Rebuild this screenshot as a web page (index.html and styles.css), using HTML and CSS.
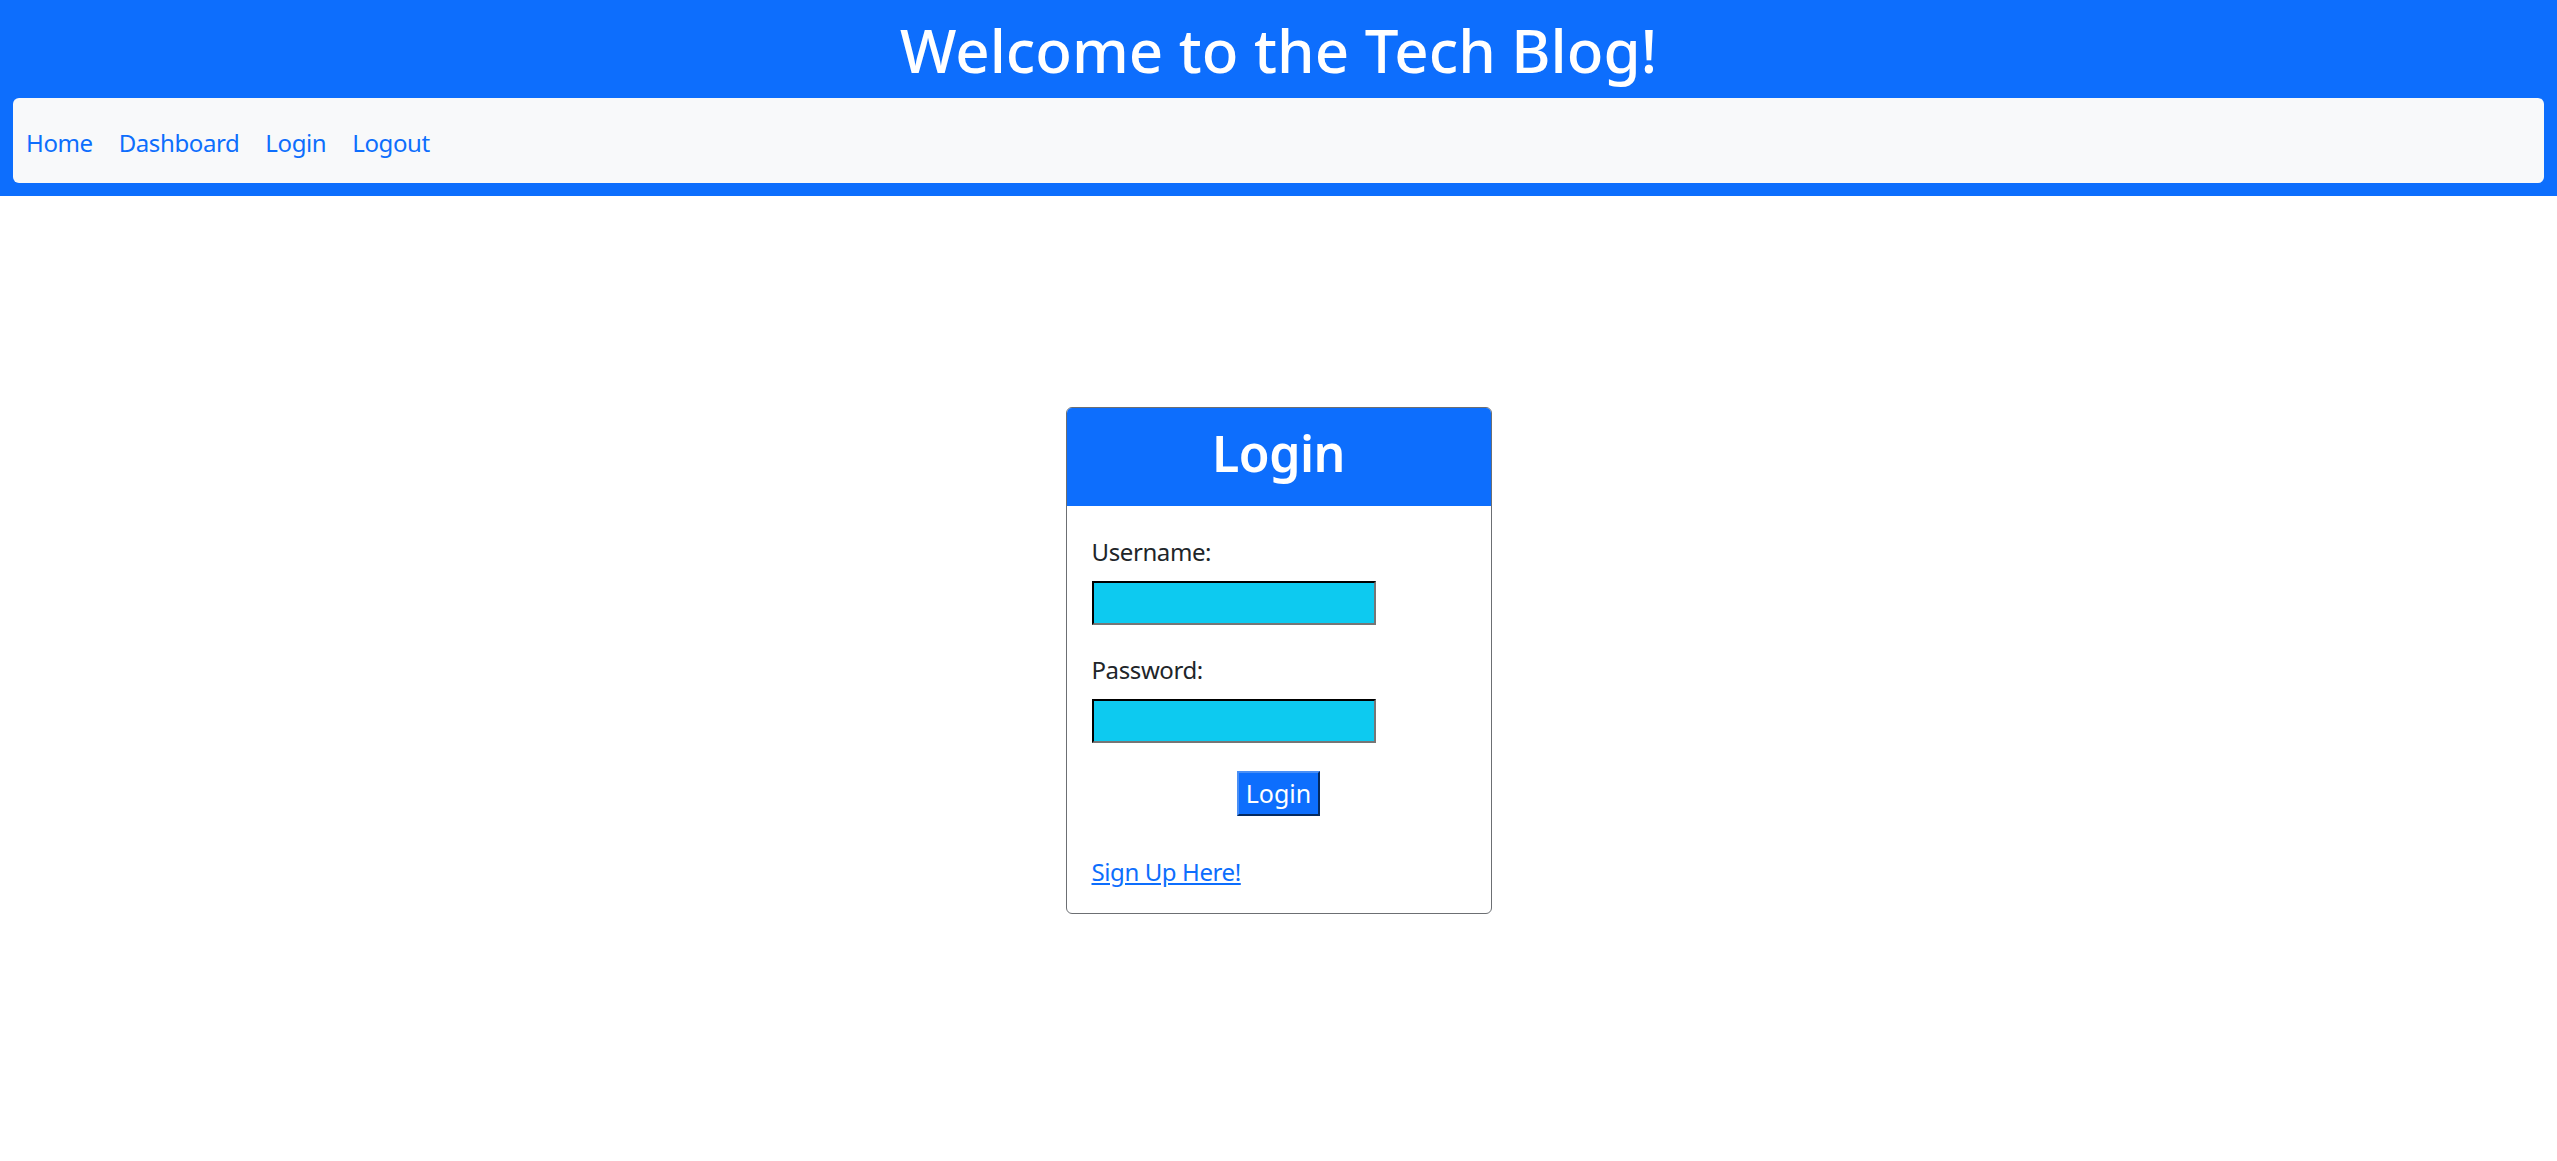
FILE: index.html
```html
<!DOCTYPE html>
<html lang="en">
<head>
<meta charset="utf-8">
<title>Tech Blog - Login</title>
<link rel="stylesheet" href="styles.css">
</head>
<body>
<header class="site-header">
  <h1 class="site-title">Welcome to the Tech Blog!</h1>
  <nav class="site-nav">
    <a class="nav-link" href="#">Home</a>
    <a class="nav-link" href="#">Dashboard</a>
    <a class="nav-link" href="#">Login</a>
    <a class="nav-link" href="#">Logout</a>
  </nav>
</header>
<main class="main">
  <section class="card">
    <div class="card-header">
      <h2 class="card-title">Login</h2>
    </div>
    <form class="card-body">
      <label class="field-label" for="username">Username:</label>
      <input class="field-input" id="username" type="text">
      <label class="field-label field-label-second" for="password">Password:</label>
      <input class="field-input" id="password" type="password">
      <div class="btn-row">
        <button class="btn" type="button">Login</button>
      </div>
      <a class="signup-link" href="#">Sign Up Here!</a>
    </form>
  </section>
</main>
</body>
</html>
```

FILE: styles.css
```css
html, body {
  margin: 0;
  padding: 0;
  background: #ffffff;
}

body {
  font-family: "Noto Sans", "Open Sans", "DejaVu Sans", sans-serif;
  font-size: 24px;
  letter-spacing: -0.4px;
  line-height: 39px;
  color: #212529;
}

.site-header {
  background: #0d6efd;
  padding: 14px 13px 13px;
}

.site-title {
  margin: 0 0 12px;
  font-size: 60px;
  line-height: 72px;
  font-weight: 500;
  letter-spacing: 0;
  color: #ffffff;
  text-align: center;
}

.site-nav {
  display: flex;
  align-items: center;
  background: #f8f9fa;
  border-radius: 6px;
  height: 85px;
  box-sizing: border-box;
  padding: 3px 0 0;
}

.nav-link {
  color: #0d6efd;
  text-decoration: none;
  padding: 0 13px;
}

.main {
  display: flex;
  justify-content: center;
  padding-top: 211px;
}

.card {
  width: 426px;
  box-sizing: border-box;
  border: 1px solid #6c6f73;
  border-radius: 6px;
  overflow: hidden;
}

.card-header {
  background: #0d6efd;
  height: 98px;
  box-sizing: border-box;
  padding-top: 13px;
}

.card-title {
  margin: 0;
  font-size: 50px;
  line-height: 64px;
  font-weight: 600;
  letter-spacing: -0.5px;
  color: #ffffff;
  text-align: center;
}

.card-body {
  display: flex;
  flex-direction: column;
  align-items: flex-start;
  padding: 26px 25px 22px;
  margin: 0;
}

.field-label {
  display: block;
  line-height: 39px;
}

.field-label-second {
  margin-top: 25px;
}

.field-input {
  margin-top: 10px;
  width: 284px;
  height: 44px;
  box-sizing: border-box;
  background: #0dcaf0;
  border: 2px inset #767676;
  border-top-color: #222;
  border-left-color: #222;
  padding: 0;
  font: inherit;
}

.btn-row {
  align-self: stretch;
  display: flex;
  justify-content: center;
  margin-top: 28px;
}

.btn {
  background: #0d6efd;
  color: #ffffff;
  font: inherit;
  font-size: 25px;
  line-height: 35px;
  height: 45px;
  width: 83px;
  box-sizing: border-box;
  padding: 0;
  border: 2px outset #1f6fe0;
  border-top-color: #4a8ff5;
  border-left-color: #4a8ff5;
  border-bottom-color: #0a4fb4;
  border-right-color: #0a4fb4;
}

.signup-link {
  margin-top: 36px;
  color: #0d6efd;
  text-decoration: underline;
  line-height: 39px;
}
```
